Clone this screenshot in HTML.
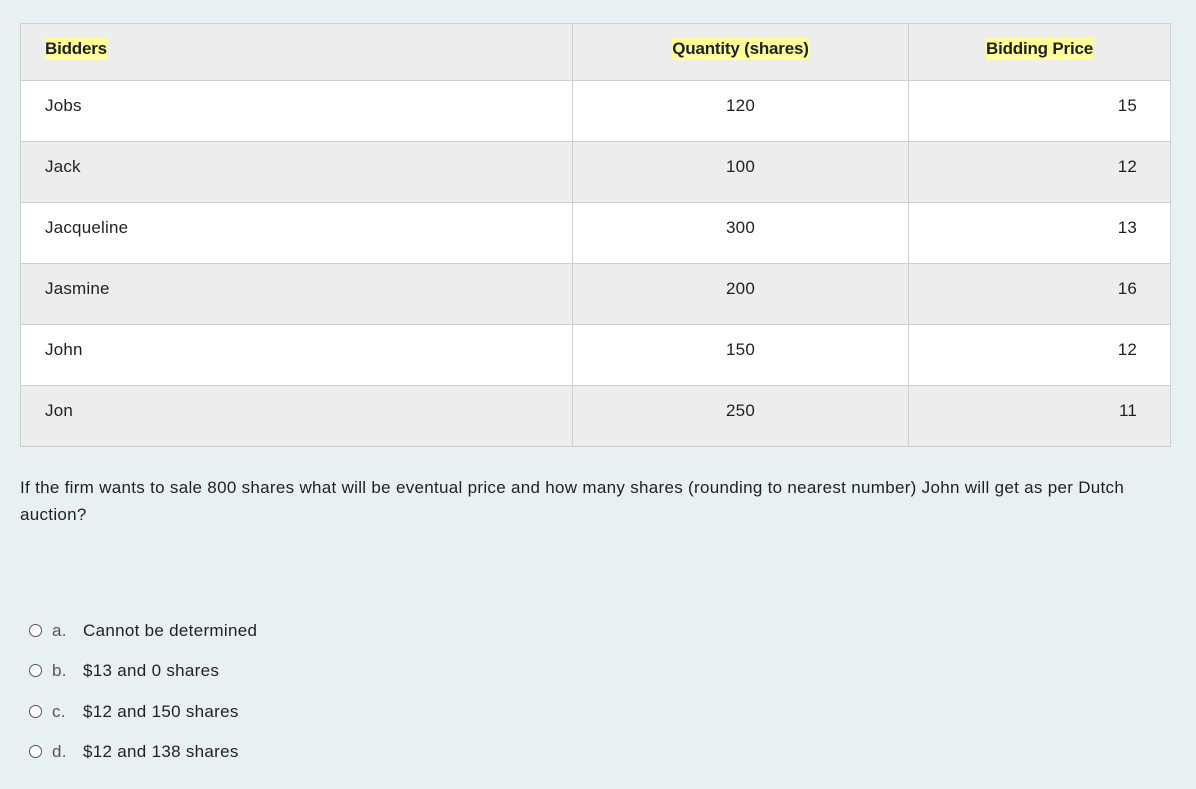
<!DOCTYPE html>
<html><head><meta charset="utf-8"><style>
body{margin:0;width:1196px;height:789px;background:#e7f1f4;font-family:"Liberation Sans",sans-serif;color:#1d2125;overflow:hidden;position:relative}
table{position:absolute;left:20px;top:23px;width:1151px;border-collapse:collapse;font-size:17px;letter-spacing:0.2px}
td,th{border:1px solid #cfcfcf;padding:0 24px;height:60px;vertical-align:top}
td{padding-top:15px;height:45px;line-height:20px}
tr.h th{height:42px;padding-top:14px;line-height:22px;background:#ededed;font-weight:bold;font-size:17px;letter-spacing:-0.2px}
th span{background:#ffff99;display:inline-block}
tr.g td{background:#ededed}
tr.w td{background:#fff}
.c{text-align:center}.r{text-align:right;padding-right:33px}
.q{position:absolute;left:20px;top:474px;width:1120px;font-size:17px;line-height:27px;letter-spacing:0.3px}
.o{position:absolute;left:29px;font-size:17px;height:20px;line-height:20px;letter-spacing:0.3px}
.o i{display:inline-block;width:11px;height:11px;border:1px solid #555;border-radius:50%;background:#fff;vertical-align:-1px}
.o b{font-weight:normal;color:#555;position:absolute;left:23px;top:0}
.o em{font-style:normal;position:absolute;left:54px;top:0;white-space:nowrap}
</style></head><body>
<table>
<tr class="h"><th style="text-align:left;width:503px"><span>Bidders</span></th><th class="c" style="width:287px"><span>Quantity (shares)</span></th><th class="c"><span>Bidding Price</span></th></tr>
<tr class="w"><td>Jobs</td><td class="c">120</td><td class="r">15</td></tr>
<tr class="g"><td>Jack</td><td class="c">100</td><td class="r">12</td></tr>
<tr class="w"><td>Jacqueline</td><td class="c">300</td><td class="r">13</td></tr>
<tr class="g"><td>Jasmine</td><td class="c">200</td><td class="r">16</td></tr>
<tr class="w"><td>John</td><td class="c">150</td><td class="r">12</td></tr>
<tr class="g"><td>Jon</td><td class="c">250</td><td class="r">11</td></tr>
</table>
<div class="q">If the firm wants to sale 800 shares what will be eventual price and how many shares (rounding to nearest number) John will get as per Dutch auction?</div>
<div class="o" style="top:621px"><i></i><b>a.</b><em>Cannot be determined</em></div>
<div class="o" style="top:661px"><i></i><b>b.</b><em>$13 and 0 shares</em></div>
<div class="o" style="top:702px"><i></i><b>c.</b><em>$12 and 150 shares</em></div>
<div class="o" style="top:742px"><i></i><b>d.</b><em>$12 and 138 shares</em></div>
</body></html>
